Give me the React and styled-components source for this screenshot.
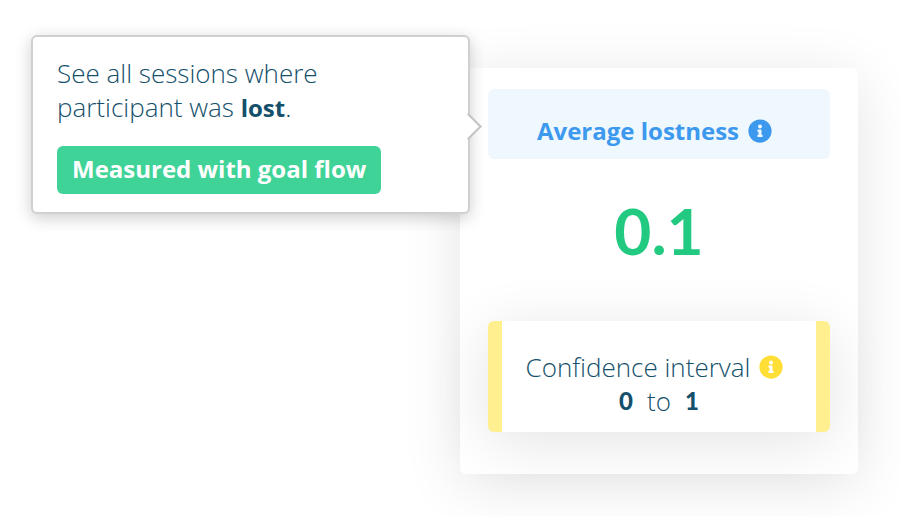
import React from 'react'
import styled, { createGlobalStyle } from 'styled-components'
import { FaInfoCircle } from 'react-icons/fa'


const GlobalStyle = createGlobalStyle`
  * {
    box-sizing: border-box;
  }

  body {
    margin: 0;
    background: #fff;
    color: #14506b;
    font-family: "Open Sans", "Noto Sans", sans-serif;
    font-size: 26px;
    font-weight: 300;
    line-height: 34px;
    overflow-x: hidden;
  }

  strong {
    font-size: 24px;
    font-weight: 700;
  }
`

const Page = styled.main`
  display: flex;
  justify-content: flex-end;
  padding: 68px 42px 42px;
`

const Card = styled.section`
  width: 100%;
  max-width: 398px;
  padding: 21px 28px 42px;
  border-radius: 6px;
  background: #fff;
  box-shadow: 0 10px 60px rgba(0, 0, 0, 0.11);
`

const CardHeader = styled.header`
  position: relative;
  display: flex;
  justify-content: center;
  padding: 25px 16px 11px;
  border-radius: 6px;
  background: #eff7ff;
`

const Title = styled.h2`
  display: flex;
  align-items: center;
  gap: 9px;
  margin: 0;
  color: #3c99ee;
  font-size: 24px;
  font-weight: 700;
`

const InfoButton = styled.button`
  display: inline-flex;
  margin-right: 9px;
  padding: 0;
  border: 0;
  background: none;
  color: ${({ $color }) => $color};
  font-size: 24px;
  cursor: pointer;
`

const Score = styled.p`
  margin: 0;
  padding: 32px 0 50px;
  color: #22ca81;
  font-family: Lato, sans-serif;
  font-size: 64px;
  font-weight: 700;
  line-height: 80px;
  text-align: center;
`

const Interval = styled.div`
  padding: 29px 8px 14px;
  border: solid #ffef8f;
  border-width: 0 14px;
  border-radius: 6px;
  background: #fff;
  box-shadow: 0 10px 60px rgba(0, 0, 0, 0.11);
`

const IntervalLine = styled.p`
  display: flex;
  align-items: center;
  justify-content: center;
  gap: ${({ $gap }) => $gap};
  margin: 0;
`

const Bound = styled.strong`
  font-family: Lato, sans-serif;
  font-weight: 900;
`

const Tooltip = styled.div`
  position: absolute;
  top: -54px;
  right: calc(100% + 18px);
  width: 439px;
  padding: 19px 24px 18px;
  border: 2px solid #d0d0d0;
  border-radius: 6px;
  background: #fff;
  box-shadow: 0 4px 16px rgba(0, 0, 0, 0.2);

  &::after {
    content: "";
    position: absolute;
    top: 80px;
    right: -10px;
    width: 17px;
    height: 17px;
    border: solid #c4c4c4;
    border-width: 2px 2px 0 0;
    background: linear-gradient(45deg, transparent 50%, #fff 50%);
    transform: rotate(45deg);
  }
`

const TooltipText = styled.p`
  margin: 0 0 21px;
`

const Tag = styled.span`
  display: inline-block;
  padding: 6px 15px 8px;
  border-radius: 6px;
  background: #40d398;
  color: #fff;
  font-size: 24px;
  font-weight: 700;
  vertical-align: top;
`

export default function App() {
    return (
        <>
            <GlobalStyle />
            <Page>
                <Card>
                    <CardHeader>
                        <Title>
                            Average lostness
                            <InfoButton $color="#3c99ee" aria-label="About average lostness" aria-describedby="lostness-tip">
                                <FaInfoCircle />
                            </InfoButton>
                        </Title>
                        <Tooltip id="lostness-tip" role="tooltip">
                            <TooltipText>
                                See all sessions where<br />
                                participant was <strong>lost</strong>.
                            </TooltipText>
                            <Tag>Measured with goal flow</Tag>
                        </Tooltip>
                    </CardHeader>
                    <Score>0.1</Score>
                    <Interval>
                        <IntervalLine $gap="9px">
                            Confidence interval
                            <InfoButton $color="#ffdf36" aria-label="About confidence interval">
                                <FaInfoCircle />
                            </InfoButton>
                        </IntervalLine>
                        <IntervalLine $gap="14px">
                            <Bound>0</Bound>
                            <span>to</span>
                            <Bound>1</Bound>
                        </IntervalLine>
                    </Interval>
                </Card>
            </Page>
        </>
    )
}
